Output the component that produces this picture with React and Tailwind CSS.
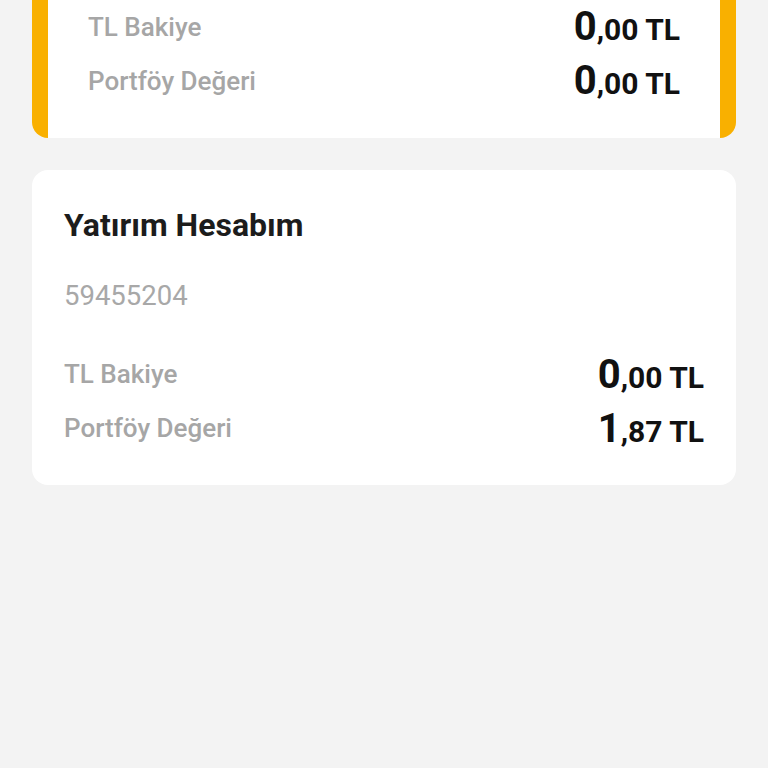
import React from "react";

function Amount({ whole, rest }) {
  return (
    <span className="font-bold text-[#111] leading-none whitespace-nowrap">
      <span className="text-[40px]">{whole}</span>
      <span className="text-[30px]">,{rest} TL</span>
    </span>
  );
}

function Row({ label, whole, rest }) {
  return (
    <div className="flex items-center justify-between h-[54px]">
      <span className="text-[26px] text-[#a6a6a6] font-medium">{label}</span>
      <Amount whole={whole} rest={rest} />
    </div>
  );
}

export default function App() {
  return (
    <div
      className="min-h-[768px] bg-[#f3f3f3] px-8"
      style={{ fontFamily: "Roboto, 'Noto Sans', sans-serif" }}
    >
      {/* top card, scrolled partly out of view */}
      <div className="bg-white border-x-[16px] border-[#f9b000] rounded-b-2xl px-10 pt-0 pb-[30px]">
        <Row label="TL Bakiye" whole="0" rest="00" />
        <Row label="Portföy Değeri" whole="0" rest="00" />
      </div>

      <div className="mt-8 bg-white rounded-2xl px-8 pt-[39px] pb-[29px]">
        <h2 className="text-[32px] font-bold text-[#1c1c1c] leading-none">Yatırım Hesabım</h2>
        <div className="mt-[41px] text-[27.5px] text-[#a8a8a8] leading-none">59455204</div>
        <div className="mt-[38px]">
          <Row label="TL Bakiye" whole="0" rest="00" />
          <Row label="Portföy Değeri" whole="1" rest="87" />
        </div>
      </div>
    </div>
  );
}
